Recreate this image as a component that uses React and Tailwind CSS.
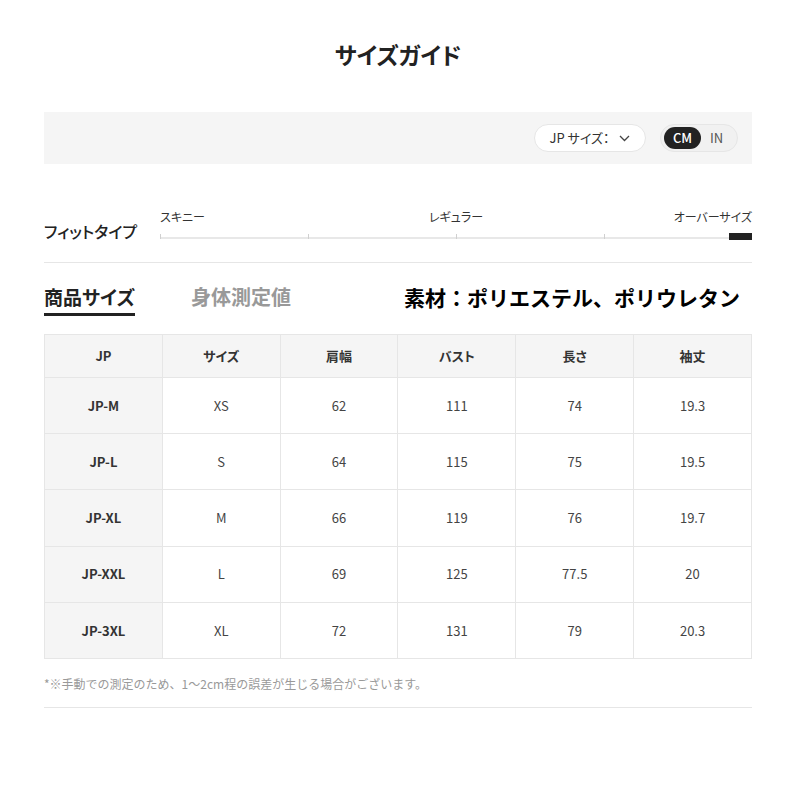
import React from "react";

const rows = [
  ["JP-M", "XS", "62", "111", "74", "19.3"],
  ["JP-L", "S", "64", "115", "75", "19.5"],
  ["JP-XL", "M", "66", "119", "76", "19.7"],
  ["JP-XXL", "L", "69", "125", "77.5", "20"],
  ["JP-3XL", "XL", "72", "131", "79", "20.3"],
];
const heads = ["JP", "サイズ", "肩幅", "バスト", "長さ", "袖丈"];

export default function App() {
  return (
    <div
      className="w-[800px] h-[800px] bg-white text-[#333] pl-[44px] pr-[48px] [font-feature-settings:'palt']"
      style={{ fontFamily: '"Noto Sans CJK JP", "Open Sans", sans-serif' }}
    >
      <h1 className="pt-[38px] h-[112px] text-center text-[23px] font-bold text-[#222] leading-[32px]">
        サイズガイド
      </h1>

      <div className="h-[52px] bg-[#f5f5f5] flex items-center justify-end pr-[14px] gap-[14px]">
        <div className="h-[28px] w-[112px] bg-white border border-[#e6e6e6] rounded-full flex items-center justify-center gap-[10px] text-[13px] text-[#333]">
          <span>JP サイズ：</span>
          <svg width="11" height="7" viewBox="0 0 11 7" fill="none" stroke="#444" strokeWidth="1.3">
            <path d="M1 1l4.5 4.5L10 1" />
          </svg>
        </div>
        <div className="h-[28px] w-[78px] bg-[#f1f1f1] border border-[#e6e6e6] rounded-full flex items-center pl-[3px] gap-[9px] text-[13px]">
          <span className="h-[22px] w-[37px] bg-[#222] text-white rounded-full flex items-center justify-center font-medium">CM</span>
          <span className="text-[#555]">IN</span>
        </div>
      </div>

      <div className="flex items-end pt-[45px] pb-[22px] border-b border-[#e6e6e6]">
        <div className="w-[116px] text-[16px] font-medium text-[#222] leading-[20px] mb-[-1px]">フィットタイプ</div>
        <div className="flex-1 relative">
          <div className="relative h-[16px] text-[12px] text-[#333] leading-[16px]">
            <span className="absolute left-0 top-0">スキニー</span>
            <span className="absolute left-1/2 -translate-x-1/2 top-0">レギュラー</span>
            <span className="absolute right-0 top-0">オーバーサイズ</span>
          </div>
          <div className="relative h-[8px] mt-[7px]">
            <div className="absolute left-0 right-0 bottom-[1px] h-[2px] bg-[#e8e8e8]" />
            <div className="absolute left-0 bottom-[1px] w-[1px] h-[5px] bg-[#d0d0d0]" />
            <div className="absolute left-1/4 bottom-[1px] w-[1px] h-[5px] bg-[#d0d0d0]" />
            <div className="absolute left-1/2 bottom-[1px] w-[1px] h-[5px] bg-[#d0d0d0]" />
            <div className="absolute left-3/4 bottom-[1px] w-[1px] h-[5px] bg-[#d0d0d0]" />
            <div className="absolute right-0 bottom-0 w-[23px] h-[7px] bg-[#222]" />
          </div>
        </div>
      </div>

      <div className="flex items-end h-[53px]">
        <div className="w-[360px] flex items-end gap-[56px]">
          <div className="text-[19px] font-bold text-[#222] leading-[26px] pb-[3px] border-b-[3px] border-[#222]">商品サイズ</div>
          <div className="text-[20px] font-bold text-[#999] leading-[26px] pb-[6px]">身体測定値</div>
        </div>
        <div className="text-[21px] font-bold text-black leading-[28px] pb-[5px] [font-feature-settings:normal]">素材：ポリエステル、ポリウレタン</div>
      </div>

      <table className="w-full mt-[18px] border-collapse table-fixed text-[13px]">
        <thead>
          <tr className="h-[43px] bg-[#f5f5f5]">
            {heads.map((h) => (
              <th key={h} className="border border-[#e6e6e6] font-bold text-[#333]">{h}</th>
            ))}
          </tr>
        </thead>
        <tbody>
          {rows.map((r) => (
            <tr key={r[0]} className="h-[56.2px]">
              {r.map((c, i) => (
                <td
                  key={i}
                  className={
                    i === 0
                      ? "border border-[#e6e6e6] text-center bg-[#f5f5f5] font-bold text-[#333]"
                      : "border border-[#e6e6e6] text-center text-[#444]"
                  }
                >
                  {c}
                </td>
              ))}
            </tr>
          ))}
        </tbody>
      </table>

      <div className="pt-[16px] pb-[14px] border-b border-[#e6e6e6] text-[12px] text-[#999] leading-[18px] [font-feature-settings:normal]">
        *※手動での測定のため、1〜2cm程の誤差が生じる場合がございます。
      </div>
    </div>
  );
}
